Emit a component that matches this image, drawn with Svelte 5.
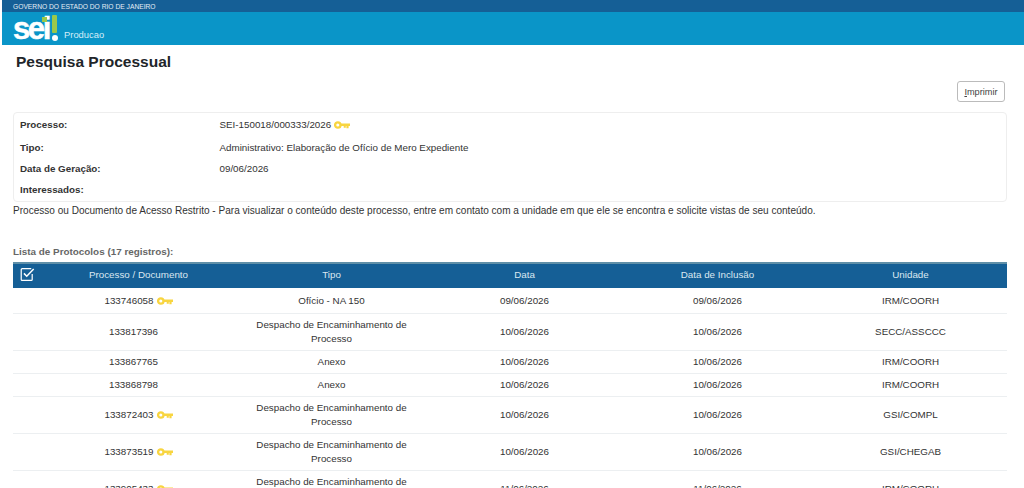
<script>
    const rows = [
        { id: '133746058', key: true, tipo: 'Ofício - NA 150', data: '09/06/2026', incl: '09/06/2026', un: 'IRM/COORH' },
        { id: '133817396', tipo: 'Despacho de Encaminhamento de Processo', data: '10/06/2026', incl: '10/06/2026', un: 'SECC/ASSCCC' },
        { id: '133867765', tipo: 'Anexo', data: '10/06/2026', incl: '10/06/2026', un: 'IRM/COORH' },
        { id: '133868798', tipo: 'Anexo', data: '10/06/2026', incl: '10/06/2026', un: 'IRM/COORH' },
        { id: '133872403', key: true, tipo: 'Despacho de Encaminhamento de Processo', data: '10/06/2026', incl: '10/06/2026', un: 'GSI/COMPL' },
        { id: '133873519', key: true, tipo: 'Despacho de Encaminhamento de Processo', data: '10/06/2026', incl: '10/06/2026', un: 'GSI/CHEGAB' },
        { id: '133905433', key: true, tipo: 'Despacho de Encaminhamento de Processo', data: '11/06/2026', incl: '11/06/2026', un: 'IRM/COORH' }
    ];
</script>

{#snippet key()}
    <svg class="key" viewBox="0 0 16 8" width="16" height="8">
        <circle cx="3.8" cy="4" r="2.7" fill="none" stroke="#f8d540" stroke-width="2.3"/>
        <path d="M6.5 2.6h9.5v2.4h-1.4V7.2h-2.2V5h-.6v1.7H9.7V5H6.5z" fill="#f8d540"/>
    </svg>
{/snippet}

<div class="gov"><span>GOVERNO DO ESTADO DO RIO DE JANEIRO</span></div>
<header class="brand">
    <div class="logo">sei<i class="dot"></i><span class="bang"><i></i><b></b></span></div>
    <span class="env">Producao</span>
</header>

<main>
    <h1>Pesquisa Processual</h1>
    <div class="actions"><button><u>I</u>mprimir</button></div>

    <section class="card">
        <div class="line l1"><strong>Processo:</strong><span>SEI-150018/000333/2026 {@render key()}</span></div>
        <div class="line l2"><strong>Tipo:</strong><span>Administrativo: Elaboração de Ofício de Mero Expediente</span></div>
        <div class="line l3"><strong>Data de Geração:</strong><span>09/06/2026</span></div>
        <div class="line l4"><strong>Interessados:</strong><span></span></div>
    </section>

    <p class="notice">Processo ou Documento de Acesso Restrito - Para visualizar o conteúdo deste processo, entre em contato com a unidade em que ele se encontra e solicite vistas de seu conteúdo.</p>

    <div class="caption">Lista de Protocolos (17 registros):</div>
    <table>
        <thead>
            <tr>
                <th class="chk">
                    <svg viewBox="0 0 16 16" width="15" height="15" fill="none" stroke="#fff" stroke-width="1.3">
                        <path d="M13 7.5V13.2a1 1 0 0 1-1 1H2.3a1 1 0 0 1-1-1V2.8a1 1 0 0 1 1-1H12"/>
                        <path d="M4.2 6.8l3 3L14.6 2.2" stroke-width="1.6"/>
                    </svg>
                </th>
                <th>Processo / Documento</th>
                <th>Tipo</th>
                <th>Data</th>
                <th>Data de Inclusão</th>
                <th>Unidade</th>
            </tr>
        </thead>
        <tbody>
            {#each rows as r}
                <tr class:haskey={r.key}>
                    <td></td>
                    <td class="doc">{r.id}{#if r.key}{@render key()}{/if}</td>
                    <td>{r.tipo}</td>
                    <td>{r.data}</td>
                    <td>{r.incl}</td>
                    <td>{r.un}</td>
                </tr>
            {/each}
        </tbody>
    </table>
</main>

<style>
    :global(body) {
        margin: 0;
        background: #fff;
        font-family: "Liberation Sans", Arial, sans-serif;
        color: #212529;
        overflow: hidden;
        height: 488px;
    }

    .gov {
        height: 12px;
        background: #155f96;
        margin-left: 2px;
        padding-left: 11px;
        font-size: 6.7px;
        line-height: 13px;
        color: #e4eef5;
    }

    .brand {
        height: 33px;
        margin-left: 2px;
        background: #0a95c8;
        display: flex;
        align-items: flex-end;
        padding-left: 11px;
        color: #d5eef8;
        box-sizing: border-box;
    }

    .logo {
        position: relative;
        font-size: 31px;
        font-weight: 700;
        line-height: 31px;
        letter-spacing: -2.4px;
        -webkit-text-stroke: 0.5px #fff;
        color: #fff;
        display: flex;
        height: 31px;
        width: 41px;
        margin-bottom: 1px;
    }

    .dot {
        position: absolute;
        left: 29px;
        top: 4px;
        width: 5px;
        height: 5px;
        background: #9bc84a;
    }

    .bang {
        width: 6px;
        margin-left: 3px;
        display: flex;
        flex-direction: column;
        align-items: center;
    }

    .bang i {
        width: 5px;
        height: 18px;
        margin-top: 2px;
        background: #9bc84a;
        border-radius: 1px;
    }

    .bang b {
        width: 6px;
        height: 6px;
        margin-top: 2px;
        background: #fff;
        border-radius: 50%;
    }

    .env {
        font-size: 9.4px;
        margin-left: 10px;
        margin-bottom: 5px;
    }

    main {
        padding: 0 17px 0 13px;
    }

    h1 {
        margin: 0;
        padding: 8px 0 0 3px;
        font-size: 15.5px;
        line-height: 17px;
        font-weight: 700;
        color: #212529;
    }

    .actions {
        display: flex;
        justify-content: flex-end;
        margin-top: 11px;
        padding-right: 2px;
    }

    button {
        width: 48px;
        height: 21px;
        padding: 0;
        background: #fff;
        border: 1px solid #bbb;
        border-radius: 3px;
        font: 9.2px "Liberation Sans", Arial, sans-serif;
        color: #444;
    }

    .card {
        margin-top: 10px;
        width: 994px;
        height: 90px;
        box-sizing: border-box;
        border: 1px solid #eee;
        border-radius: 4px;
        padding: 0 6px;
        font-size: 9.8px;
        color: #333;
    }

    .line {
        display: grid;
        grid-template-columns: 199.5px 1fr;
        align-items: center;
    }

    .l1 { height: 23px; }
    .l2 { height: 22px; }
    .l3 { height: 21px; }
    .l4 { height: 21px; }

    .line strong {
        color: #333;
    }

    .line .key {
        margin-left: 0;
    }

    .notice {
        margin: 2px 0 0;
        font-size: 10.05px;
        line-height: 13px;
        color: #333;
    }

    .caption {
        margin-top: 29px;
        font-size: 9.9px;
        line-height: 12px;
        font-weight: 700;
        color: #666;
    }

    table {
        margin-top: 4px;
        width: 994px;
        table-layout: fixed;
        border-collapse: collapse;
        font-size: 9.8px;
        color: #333;
    }

    th {
        width: 193px;
        height: 25px;
        padding: 0 0 3px;
        box-sizing: border-box;
        background: #155f96;
        border-top: 2px solid #5f8fa8;
        color: #dbe8f1;
        font-weight: 400;
        text-align: center;
        vertical-align: middle;
    }

    th.chk {
        width: 29px;
    }

    th.chk svg {
        display: block;
        margin: 0 0 0 7px;
    }

    td {
        padding: 4px 2px;
        line-height: 14px;
        text-align: center;
        vertical-align: middle;
        border-bottom: 1px solid #eceff1;
    }

    td.doc {
        padding-right: 12px;
    }

    .haskey td.doc {
        padding-right: 2px;
    }

    .haskey td {
        height: 17px;
    }

    .key {
        vertical-align: -1px;
        margin-left: 3px;
    }
</style>
